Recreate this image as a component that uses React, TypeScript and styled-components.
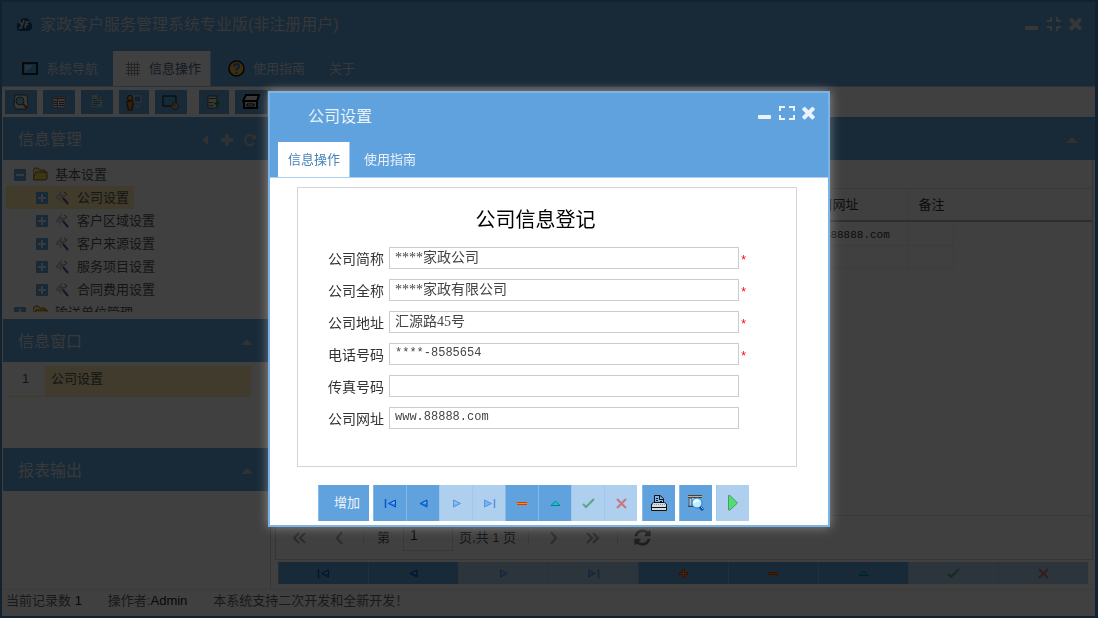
import React from 'react';
import styled, { createGlobalStyle, css } from 'styled-components';

const blue = '#60a2dd';
const lightBlue = '#aecfee';
const sans = '"Liberation Sans", "Noto Sans CJK SC", sans-serif';
const serif = '"Liberation Serif", "Noto Sans CJK SC", serif';
const mono = '"Liberation Mono", "Noto Sans CJK SC", monospace';

const GlobalStyle = createGlobalStyle`
  * { box-sizing: border-box; }
  body { margin: 0; font: 13px/20px ${sans}; color: #555; background: #fff; }
  button { border: 0; padding: 0; margin: 0; background: none; font: inherit; color: inherit; }
  svg { display: block; flex: none; }
  h1, h2, h3, p { margin: 0; font-weight: 400; }
`;

/* ---------- icons ---------- */

const MinimizeIcon = () => (
  <svg width="16" height="16" viewBox="0 0 16 16"><rect x="1" y="10" width="13" height="4" rx="1" fill="currentColor" /></svg>
);
const MaximizeIcon = () => (
  <svg width="16" height="16" viewBox="0 0 16 16" fill="none" stroke="currentColor" strokeWidth="2">
    <path d="M6 2H1V6M10 2H15V6M1 10V14H6M15 10V14H10" />
  </svg>
);
const RestoreIcon = () => (
  <svg width="16" height="16" viewBox="0 0 16 16" fill="none" stroke="currentColor" strokeWidth="2">
    <path d="M5 1V5H1M11 1V5H15M1 11H5V15M15 11H11V15" />
  </svg>
);
const CloseIcon = () => (
  <svg width="16" height="16" viewBox="192 192 1500 1500" fill="currentColor">
    <path d="M1490 1322q0 40-28 68l-136 136q-28 28-68 28t-68-28l-294-294-294 294q-28 28-68 28t-68-28l-136-136q-28-28-28-68t28-68l294-294-294-294q-28-28-28-68t28-68l136-136q28-28 68-28t68 28l294 294 294-294q28-28 68-28t68 28l136 136q28 28 28 68t-28 68l-294 294 294 294q28 28 28 68z" />
  </svg>
);
const CaretLeft = () => <svg width="12" height="12" viewBox="0 0 12 12"><path d="M9 1V11L3 6z" fill="currentColor" /></svg>;
const CaretUp = () => <svg width="12" height="12" viewBox="0 0 12 12"><path d="M0 9L6 3L12 9z" fill="currentColor" /></svg>;
const PlusIcon = () => <svg width="12" height="12" viewBox="0 0 12 12"><path d="M4 0H8V4H12V8H8V12H4V8H0V4H4z" fill="currentColor" /></svg>;
const RepeatIcon = () => (
  <svg width="14" height="14" viewBox="0 0 1536 1792" fill="currentColor">
    <path d="M1536 256v448q0 26-19 45t-45 19h-448q-42 0-59-40-17-39 14-69l138-138q-148-137-349-137-104 0-198.500 40.500t-163.500 109.500-109.500 163.500-40.500 198.500 40.500 198.500 109.500 163.500 163.500 109.500 198.500 40.500q119 0 225-52t179-147q7-10 23-12 15 0 25 9l137 138q9 8 9.500 20.500t-7.500 22.500q-109 132-264 204.500t-327 72.500q-156 0-298-61t-245-164-164-245-61-298 61-298 164-245 245-164 298-61q147 0 284.500 55.500t244.500 156.500l130-129q29-31 70-14 39 17 39 59z" />
  </svg>
);
const RefreshIcon = () => (
  <svg width="19" height="19" viewBox="0 0 1792 1792" fill="currentColor">
    <path d="M1639 1056q0 5-1 7-64 268-268 434.500t-478 166.500q-146 0-282.500-55t-243.500-157l-129 129q-19 19-45 19t-45-19-19-45v-448q0-26 19-45t45-19h448q26 0 45 19t19 45-19 45l-137 137q71 66 161 102t187 36q134 0 250-65t186-179q11-17 53-117 8-23 30-23h192q13 0 22.500 9.500t9.500 22.500zm25-800v448q0 26-19 45t-45 19h-448q-26 0-45-19t-19-45 19-45l138-138q-148-137-349-137-134 0-250 65t-186 179q-11 17-53 117-8 23-30 23h-199q-13 0-22.500-9.500t-9.500-22.500v-7q65-268 270-434.500t480-166.500q146 0 284 55.500t245 156.500l130-129q19-19 45-19t45 19 19 45z" />
  </svg>
);
const Chevron = ({ double, right }: { double?: boolean; right?: boolean }) => (
  <svg width="16" height="16" viewBox="0 0 16 16" fill="none" stroke="#aaa" strokeWidth="2">
    {right
      ? <path d={double ? 'M2 3L7 8L2 13M8 3L13 8L8 13' : 'M6 2L11 8L6 14'} />
      : <path d={double ? 'M8 3L3 8L8 13M14 3L9 8L14 13' : 'M11 2L6 8L11 14'} />}
  </svg>
);

/* record navigator glyphs */
const FirstIcon = () => (
  <svg width="13" height="13" viewBox="0 0 13 13">
    <path d="M1.500 2V11" stroke="#0a56cc" strokeWidth="1.500" />
    <path d="M11.500 3V10L4.500 6.500z" fill="#1c84ec" stroke="#0b4cb8" /><path d="M10.500 4.500V6.500H7z" fill="#8fd4ff" />
  </svg>
);
const PrevIcon = () => (
  <svg width="13" height="13" viewBox="0 0 13 13">
    <path d="M10 3V10L3 6.500z" fill="#1480ea" stroke="#0b4cb8" /><path d="M9 4.500V6.500H5.500z" fill="#7cc6ff" />
  </svg>
);
const NextIcon = () => (
  <svg width="13" height="13" viewBox="0 0 13 13"><path d="M3.500 3V10L10.500 6.500z" fill="#74b4f4" stroke="#5b93dc" /><path d="M4.500 4.500V6.500H8z" fill="#a4d0fa" /></svg>
);
const LastIcon = () => (
  <svg width="13" height="13" viewBox="0 0 13 13">
    <path d="M1.500 3V10L8.500 6.500z" fill="#74b4f4" stroke="#5b93dc" /><path d="M11.500 2V11" stroke="#5b93dc" strokeWidth="1.500" />
  </svg>
);
const AddIcon = () => (
  <svg width="13" height="13" viewBox="0 0 13 13">
    <path d="M5.500 2.500H7.500V5.500H10.500V7.500H7.500V10.500H5.500V7.500H2.500V5.500H5.500z" fill="#ff9418" stroke="#e83800" />
  </svg>
);
const RemoveIcon = () => (
  <svg width="13" height="13" viewBox="0 0 13 13"><rect x="1" y="5" width="10" height="3" fill="#ff9000" /><path d="M1 5.500H11M1 7.500H11" stroke="#e03800" /></svg>
);
const EditIcon = () => (
  <svg width="13" height="13" viewBox="0 0 13 13"><path d="M2 8.500L6.500 4L11 8.500z" fill="#18c4cc" stroke="#087f92" /></svg>
);
const CheckIcon = () => (
  <svg width="13" height="13" viewBox="0 0 13 13" fill="none" stroke="#5aa68c" strokeWidth="2"><path d="M1 7L4 10L12 2" /></svg>
);
const CancelIcon = () => (
  <svg width="13" height="13" viewBox="0 0 13 13" fill="none" stroke="#c8757c" strokeWidth="2"><path d="M2 2L11 11M11 2L2 11" /></svg>
);
const PrintIcon = () => (
  <svg width="18" height="18" viewBox="0 0 18 18">
    <path d="M4.500 9V1.500H10L13.500 4.500V9" fill="#7fb7e8" stroke="#111" />
    <path d="M9.500 1V5.500H14M6 4.500H8M6 6.500H8M10 7.500H12" fill="none" stroke="#111" />
    <path d="M1.500 10L3.500 8.500H14.500L16.500 10V16.500H1.500z" fill="#d4dae4" stroke="#111" />
    <path d="M2 10.500H16" stroke="#6a9be0" strokeDasharray="1 1" /><path d="M2 13.500H16" stroke="#111" />
    <path d="M2 15.500H16" stroke="#e4e0c8" />
  </svg>
);
const PreviewIcon = () => (
  <svg width="18" height="18" viewBox="0 0 18 18">
    <path d="M1 1.500H15M1 3.500H15M1 12.500H7" stroke="#4a4038" /><path d="M1 2.500H15" stroke="#b8b0a4" /><rect x="2" y="4" width="3" height="8" fill="#8fd0f8" stroke="#555" />
    <path d="M6 4V12" stroke="#e9f4fb" />
    <circle cx="10" cy="9" r="5" fill="#c4ecff" stroke="#1a86cc" /><path d="M7 9Q8 6 12 7" stroke="#fff" strokeWidth="2" fill="none" />
    <path d="M13 13L16 16" stroke="#1c4a98" strokeWidth="3" /><path d="M14 13L16 15" stroke="#5cc0ff" />
  </svg>
);
const RunIcon = () => (
  <svg width="18" height="18" viewBox="0 0 18 18"><path d="M4.500 1.500V16H6L13.500 9L6 1.500z" fill="#4be36b" stroke="#5b8f76" /></svg>
);

/* application glyphs */
const LogoIcon = () => (
  <svg width="17" height="17" viewBox="0 0 17 17">
    <path d="M3 15Q0 14 1 10Q0 7 4 6Q5 2 9 2Q13 2 14 6Q17 8 16 12Q15 15 12 15z" fill="#10547e" />
    <path d="M3 5L6 9M8 4L5 12L3 12M9 12L10 6L13 6M10 8.500H12" stroke="#d0dae0" strokeWidth="1.500" fill="none" />
  </svg>
);
const ScreenIcon = () => (
  <svg width="16" height="16" viewBox="0 0 16 16"><rect x="1" y="2" width="14" height="11" fill="#4ba6dc" stroke="#000" strokeWidth="1.500" /><path d="M3 4H12L3 11z" fill="#8ccff0" /></svg>
);
const GridIcon = () => (
  <svg width="16" height="16" viewBox="0 0 16 16" stroke="#999"><path d="M1 3.500H15M1 6.500H15M1 9.500H15M1 12.500H15M3.500 1V15M6.500 1V15M9.500 1V15M12.500 1V15" /></svg>
);
const HelpIcon = () => (
  <svg width="17" height="17" viewBox="0 0 17 17">
    <circle cx="8.500" cy="8.500" r="7.500" fill="#f2b63c" stroke="#201000" strokeWidth="1.500" />
    <path d="M6 6.500Q6 4 8.500 4Q11 4 11 6.500Q11 8 8.500 9V10.500M8.500 12V14" fill="none" stroke="#3f6fc0" strokeWidth="2" />
  </svg>
);
const SearchPage = () => (
  <svg width="18" height="18" viewBox="0 0 18 18">
    <path d="M3 2H15L16 12L14 16H4L2 13z" fill="#eee7dc" stroke="#5a5248" />
    <circle cx="8" cy="8" r="4" fill="#7cc4d8" stroke="#2a5560" /><path d="M11 11L15 15" stroke="#a0481c" strokeWidth="2" />
  </svg>
);
const ListPage = () => (
  <svg width="18" height="18" viewBox="0 0 18 18">
    <rect x="3" y="4" width="12" height="11" fill="#e6e6e6" stroke="#777" /><path d="M4 5.500H14" stroke="#b04a28" />
    <path d="M4 8.500H7M4 10.500H7M4 12.500H7M9 8.500H14M9 10.500H14M9 12.500H14" stroke="#555" /><path d="M7.500 6V15" stroke="#3c78b8" />
  </svg>
);
const DocPage = () => (
  <svg width="18" height="18" viewBox="0 0 18 18">
    <path d="M3.500 1.500H10.500L14.500 5.500V14.500H3.500z" fill="#a9cbe0" stroke="#7aa8c4" /><path d="M10.500 2V6H14M5 6.500H9M5 8.500H12M5 10.500H12M5 12.500H10" fill="none" stroke="#54809c" />
  </svg>
);
const UserPc = () => (
  <svg width="18" height="18" viewBox="0 0 18 18">
    <rect x="9" y="3" width="7" height="6" fill="#4a78c8" stroke="#d8d8d8" /><path d="M9 12.500H16M10 14.500H15" stroke="#bbb" />
    <circle cx="5" cy="5" r="2.500" fill="#e0a050" stroke="#402000" /><path d="M2 8H8V13H7V17H3V13H2z" fill="#c88830" stroke="#402000" />
  </svg>
);
const ScreenColor = () => (
  <svg width="18" height="18" viewBox="0 0 18 18">
    <rect x="1" y="3" width="13" height="10" fill="#4ba6dc" stroke="#111" /><circle cx="13" cy="13" r="3.500" fill="#d0a040" stroke="#6040a0" /><path d="M10 13L13 10V13z" fill="#40a060" />
  </svg>
);
const ExportPage = () => (
  <svg width="18" height="18" viewBox="0 0 18 18">
    <rect x="3" y="3" width="9" height="12" fill="#dcdcdc" stroke="#555" /><path d="M4 5.500H12M4 9.500H8M4 12.500H8" stroke="#555" />
    <path d="M9 10.500H15M12 7.500V13.500" stroke="#2c8c2c" strokeWidth="2" />
  </svg>
);
const PrinterBig = () => (
  <svg width="18" height="18" viewBox="0 0 18 18">
    <path d="M4 2H17L15 8H1z" fill="#ddd" stroke="#000" strokeWidth="2" /><path d="M2 8H15V15H2z" fill="#ccc" stroke="#000" strokeWidth="2" />
    <path d="M5 11H12V13H5z" fill="#fff" stroke="#000" />
  </svg>
);
const Toggle = ({ open }: { open?: boolean }) => (
  <svg width="12" height="12" viewBox="0 0 12 12"><rect width="12" height="12" rx="1" fill={blue} /><path d={open ? 'M2 6H10' : 'M2 6H10M6 2V10'} stroke="#dde6ee" strokeWidth="2" /></svg>
);
const FolderIcon = () => (
  <svg width="15" height="16" viewBox="1 0 15 16">
    <path d="M1 12V3L3 1H6L8 3H13V6" fill="#f6e69a" stroke="#8a6c10" /><path d="M4 5H15V12L13 13H2L1 12z" fill="#f2d552" stroke="#7d6210" />
  </svg>
);
const ToolIcon = () => (
  <svg width="15" height="16" viewBox="0 0 15 16">
    <path d="M7 1L3 5L1 8L4 9L6 12" fill="#ddd" stroke="#aaa" strokeDasharray="2 1" /><path d="M9 2L12 4L10 6" fill="none" stroke="#777" />
    <path d="M4 4L9 7M6 8L10 5" stroke="#bbb" strokeWidth="2" /><path d="M8 8L13 14" stroke="#7a3ca8" strokeWidth="2" />
  </svg>
);

/* ---------- shared parts ---------- */

const WindowButtons = styled.div`
  display: flex;
  align-items: flex-start;
  gap: 6px;
`;

const Tabs = styled.nav`
  display: flex;
  height: 36px;
  border-bottom: 1px solid #a9d0f2;
  background: ${blue};
`;

const Tab = styled.button<{ $active?: boolean; $pad: number }>`
  display: flex;
  align-items: center;
  gap: 8px;
  height: 35px;
  padding: 0 10px 0 ${p => p.$pad}px;
  color: #e9f1f9;
  ${p => p.$active && css`
    padding-right: 9px;
    border-right: 1px solid #a9d0f2;
    background: #fff;
    color: #4583bb;
  `}
`;

const NavGroup = styled.div<{ $fill?: boolean }>`
  display: flex;
  margin-right: 1px;
  ${p => p.$fill && css`height: 22px; margin: 2px 7px 5px 3px;`}
`;

const NavButton = styled.button<{ $off?: boolean; $fill?: boolean; $wide?: boolean }>`
  display: flex;
  align-items: center;
  justify-content: center;
  height: ${p => (p.$fill ? 22 : 36)}px;
  width: ${p => (p.$wide ? 51 : 33)}px;
  ${p => p.$wide && css`padding-left: 6px;`}
  ${p => p.$fill && css`flex: 1;`}
  background: ${p => (p.$off ? lightBlue : blue)};
  border-left: 1px solid ${p => (p.$off ? '#a0c8ec' : '#86b9e6')};
  color: #eef4fa;
`;

/* ---------- application window ---------- */

const AppWindow = styled.div`
  display: flex;
  flex-direction: column;
  min-height: 100vh;
  border: 2px solid #4a86bc;
  border-right-width: 3px;
  background: #fff;
`;

const TitleBar = styled.header`
  display: flex;
  align-items: center;
  justify-content: space-between;
  height: 49px;
  padding: 0 11px 6px 14px;
  background: ${blue};
  color: #d3dae1;
`;

const AppTitle = styled.h1`
  display: flex;
  align-items: center;
  gap: 7px;
  padding-top: 2px;
  font-size: 16px;
  line-height: 24px;
`;

const AppTabs = styled(Tabs)`
  gap: 5px;
  padding-left: 8px;
  > button { color: #dbe3ea; }
  > button:nth-child(2) { color: #4d6c8c; }
`;

const Toolbar = styled.div`
  display: flex;
  align-items: center;
  gap: 6px;
  height: 30px;
  padding-left: 3px;
`;

const ToolButton = styled.button<{ $narrow?: boolean }>`
  display: flex;
  align-items: center;
  justify-content: center;
  width: ${p => (p.$narrow ? 30 : 32)}px;
  height: 24px;
  background: ${blue};
`;

const ToolGap = styled.span`
  width: 0;
`;

const Columns = styled.div`
  display: flex;
  flex: 1;
  gap: 4px;
`;

const Sidebar = styled.aside`
  flex: none;
  width: 269px;
  padding-left: 1px;
  border-right: 1px solid #c4dcf0;
`;

const PanelHeader = styled.h2`
  display: flex;
  align-items: center;
  justify-content: space-between;
  height: 43px;
  padding: 2px 13px 0 15px;
  background: ${blue};
  color: #dde3e9;
  font-size: 16px;
  line-height: 24px;
`;

const PanelTools = styled.span`
  display: flex;
  align-items: center;
  gap: 10px;
  color: #bdc4cb;
`;

const FoldTool = styled(PanelTools)`
  padding-right: 4px;
`;

const TreeBody = styled.div`
  height: 159px;
  padding: 3px 3px 7px;
`;

const Tree = styled.ul`
  height: 149px;
  margin: 0;
  padding: 0;
  overflow: hidden;
  list-style: none;
`;

const TreeRow = styled.li<{ $child?: boolean; $selected?: boolean }>`
  display: flex;
  align-items: center;
  gap: 7px;
  width: max-content;
  height: 23px;
  padding: 0 5px 0 ${p => (p.$child ? 30 : 8)}px;
  ${p => p.$selected && css`background: #ffe9a8;`}
`;

const InfoBody = styled.div`
  height: 86px;
  padding: 4px 19px 4px 3px;
`;

const InfoRow = styled.div`
  display: flex;
  height: 31px;
  background: #ffe9b0;
  line-height: 26px;
`;

const InfoIndex = styled.span`
  width: 39px;
  margin-bottom: 1px;
  background: #fff;
  text-align: center;
`;

const InfoName = styled.span`
  padding-left: 6px;
`;

const Main = styled.main`
  display: flex;
  flex: 1;
  flex-direction: column;
  min-width: 0;
`;

const MainHeader = styled(PanelHeader)`
  justify-content: flex-end;
`;

const GridPanel = styled.section`
  display: flex;
  flex: 1;
  flex-direction: column;
  margin-right: 2px;
  padding-top: 28px;
  border: 1px solid #c4dcf0;
  border-top: 0;
`;

const GridHead = styled.div`
  border-top: 1px solid #dde6ee;
  border-bottom: 2px solid #b8b8b8;
`;

const DataTable = styled.table`
  width: 678px;
  border-collapse: collapse;
  table-layout: fixed;
  font-family: ${mono};

  col.site { width: 112px; }
  col.note { width: 46px; }
  th, td {
    height: 23px;
    padding: 4px 8px 0;
    border-right: 1px solid #eee;
    border-bottom: 1px solid #eee;
    font-weight: 400;
    font-size: 11px;
    line-height: 18px;
    text-align: left;
    white-space: nowrap;
    color: #333;
  }
  th { height: 31px; padding: 2px 10px 0; font-size: 13px; border-bottom: 0; }
  th:last-child { border-right: 0; }
`;

const Spacer = styled.div`
  flex: 1;
`;

const Pager = styled.div`
  display: flex;
  align-items: center;
  height: 44px;
  padding-left: 3px;
  border-top: 1px solid #dde6ee;
  white-space: pre;
`;

const PagerButton = styled.button`
  display: flex;
  justify-content: center;
  width: 40px;
  color: #777;
`;

const Separator = styled.i<{ $left?: number; $right?: number }>`
  width: 1px;
  height: 14px;
  margin: 0 ${p => p.$right ?? 4}px 0 ${p => p.$left ?? 4}px;
  background: #e4e4e4;
`;

const PageInput = styled.input`
  width: 50px;
  height: 26px;
  margin: 0 6px 0 13px;
  padding: 0 6px 6px;
  border: 1px solid #ddd;
  background: #fff;
  font: 14px/20px ${sans};
  color: #333;
`;

const StatusBar = styled.footer`
  display: flex;
  gap: 26px;
  height: 27px;
  padding-left: 4px;
  border-top: 1px solid #eee;
  line-height: 22px;
  color: #666;
  strong { font-weight: 400; color: #222; }
`;

/* ---------- dialog ---------- */

const Backdrop = styled.div`
  position: fixed;
  inset: 0;
  display: flex;
  align-items: center;
  justify-content: center;
  background: rgba(0, 0, 0, 0.75);
`;

const Dialog = styled.section`
  width: 562px;
  border: 2px solid #7cb4e8;
  background: #fff;
  box-shadow: 0 0 10px rgba(255, 255, 255, 0.4);
`;

const DialogTitle = styled.header`
  display: flex;
  justify-content: space-between;
  height: 49px;
  padding: 12px 11px 0 38px;
  background: ${blue};
  color: #eaf2fa;
  h2 { font-size: 16px; line-height: 24px; }
`;

const DialogTabs = styled(Tabs)`
  padding-left: 8px;
`;

const DialogBody = styled.form`
  padding: 9px 0 4px;
`;

const FormBox = styled.fieldset`
  height: 280px;
  margin: 0 31px 18px 27px;
  padding: 18px 0 0 27px;
  border: 1px solid #d4d4d4;
`;

const FormTitle = styled.h3`
  margin: 0 50px 12px 0;
  color: #000;
  font-size: 20px;
  line-height: 29px;
  text-align: center;
`;

const Field = styled.div`
  display: flex;
  align-items: center;
  height: 22px;
  margin-bottom: 10px;
  label { width: 64px; padding: 2px 0 0 3px; font-size: 14px; line-height: 22px; white-space: nowrap; color: #333; }
`;

const TextInput = styled.input<{ $latin?: boolean }>`
  width: 350px;
  height: 22px;
  padding: 0 5px ${p => (p.$latin ? 3 : 5)}px;
  border: 1px solid #ccc;
  color: #444;
  font: ${p => (p.$latin ? 12 : 14)}px/16px ${p => (p.$latin ? mono : serif)};
`;

const Required = styled.span`
  padding: 6px 0 0 1px;
  color: #f00;
  font: 12px/18px ${mono};
`;

const DialogActions = styled.div`
  display: flex;
  gap: 4px;
  padding-left: 48px;
`;

const tree = ['公司设置', '客户区域设置', '客户来源设置', '服务项目设置', '合同费用设置'];

const fields = [
  { id: 'short', label: '公司简称', value: '****家政公司', required: true },
  { id: 'full', label: '公司全称', value: '****家政有限公司', required: true },
  { id: 'address', label: '公司地址', value: '汇源路45号', required: true },
  { id: 'phone', label: '电话号码', value: '****-8585654', required: true, latin: true },
  { id: 'fax', label: '传真号码', value: '' },
  { id: 'site', label: '公司网址', value: 'www.88888.com', latin: true },
];

type NavItem = { name: string; icon: React.ReactNode; off?: boolean };
const addItem: NavItem = { name: '新增', icon: <AddIcon /> };
const navItems: NavItem[] = [
  { name: '首记录', icon: <FirstIcon /> },
  { name: '上一记录', icon: <PrevIcon /> },
  { name: '下一记录', icon: <NextIcon />, off: true },
  { name: '末记录', icon: <LastIcon />, off: true },
  { name: '删除', icon: <RemoveIcon /> },
  { name: '编辑', icon: <EditIcon /> },
  { name: '保存', icon: <CheckIcon />, off: true },
  { name: '取消', icon: <CancelIcon />, off: true },
];

const Navigator = ({ fill, items }: { fill?: boolean; items: NavItem[] }) => (
  <NavGroup $fill={fill}>
    {items.map(item => (
      <NavButton key={item.name} type="button" aria-label={item.name} $off={item.off} $fill={fill}>{item.icon}</NavButton>
    ))}
  </NavGroup>
);

const Cols = () => <colgroup><col /><col className="site" /><col className="note" /></colgroup>;

export default function App() {
  return (
    <>
      <GlobalStyle />
      <AppWindow>
        <TitleBar>
          <AppTitle><LogoIcon />家政客户服务管理系统专业版(非注册用户)</AppTitle>
          <WindowButtons>
            <button aria-label="最小化"><MinimizeIcon /></button>
            <button aria-label="还原"><RestoreIcon /></button>
            <button aria-label="关闭"><CloseIcon /></button>
          </WindowButtons>
        </TitleBar>
        <AppTabs>
          <Tab $pad={12}><ScreenIcon />系统导航</Tab>
          <Tab $pad={12} $active><GridIcon />信息操作</Tab>
          <Tab $pad={12}><HelpIcon />使用指南</Tab>
          <Tab $pad={9}>关于</Tab>
        </AppTabs>
        <Toolbar>
          <ToolButton aria-label="查询"><SearchPage /></ToolButton>
          <ToolButton aria-label="列表"><ListPage /></ToolButton>
          <ToolButton aria-label="文档"><DocPage /></ToolButton>
          <ToolButton aria-label="用户" $narrow><UserPc /></ToolButton>
          <ToolButton aria-label="界面"><ScreenColor /></ToolButton>
          <ToolGap />
          <ToolButton aria-label="导出" $narrow><ExportPage /></ToolButton>
          <ToolButton aria-label="打印"><PrinterBig /></ToolButton>
        </Toolbar>
        <Columns>
          <Sidebar>
            <PanelHeader>
              信息管理
              <PanelTools><CaretLeft /><PlusIcon /><RepeatIcon /></PanelTools>
            </PanelHeader>
            <TreeBody>
              <Tree>
                <TreeRow><Toggle open /><FolderIcon />基本设置</TreeRow>
                {tree.map((name, i) => (
                  <TreeRow key={name} $child $selected={i === 0}><Toggle /><ToolIcon />{name}</TreeRow>
                ))}
                <TreeRow><Toggle /><FolderIcon />输送单位管理</TreeRow>
              </Tree>
            </TreeBody>
            <PanelHeader>信息窗口<FoldTool><CaretUp /></FoldTool></PanelHeader>
            <InfoBody>
              <InfoRow><InfoIndex>1</InfoIndex><InfoName>公司设置</InfoName></InfoRow>
            </InfoBody>
            <PanelHeader>报表输出<FoldTool><CaretUp /></FoldTool></PanelHeader>
          </Sidebar>
          <Main>
            <MainHeader><FoldTool><CaretUp /></FoldTool></MainHeader>
            <GridPanel>
              <GridHead>
                <DataTable>
                  <Cols />
                  <thead><tr><th /><th>公司网址</th><th>备注</th></tr></thead>
                </DataTable>
              </GridHead>
              <DataTable>
                <Cols />
                <tbody>
                  <tr><td /><td>www.88888.com</td><td /></tr>
                  <tr><td /><td /><td /></tr>
                </tbody>
              </DataTable>
              <Spacer />
              <Pager>
                <PagerButton aria-label="首页"><Chevron double /></PagerButton>
                <PagerButton aria-label="上一页"><Chevron /></PagerButton>
                <Separator $right={13} />
                <label htmlFor="page">第</label>
                <PageInput id="page" defaultValue="1" />
                <span>页,共 1 页</span>
                <Separator $left={12} />
                <PagerButton aria-label="下一页"><Chevron right /></PagerButton>
                <PagerButton aria-label="末页"><Chevron double right /></PagerButton>
                <Separator />
                <PagerButton aria-label="刷新"><RefreshIcon /></PagerButton>
              </Pager>
            </GridPanel>
            <Navigator fill items={[...navItems.slice(0, 4), addItem, ...navItems.slice(4)]} />
          </Main>
        </Columns>
        <StatusBar>
          <span>当前记录数 <strong>1</strong></span>
          <span>操作者:<strong>Admin</strong></span>
          <span>本系统支持二次开发和全新开发！</span>
        </StatusBar>
      </AppWindow>

      <Backdrop>
        <Dialog role="dialog" aria-labelledby="dialog-title">
          <DialogTitle>
            <h2 id="dialog-title">公司设置</h2>
            <WindowButtons>
              <button aria-label="最小化"><MinimizeIcon /></button>
              <button aria-label="最大化"><MaximizeIcon /></button>
              <button aria-label="关闭"><CloseIcon /></button>
            </WindowButtons>
          </DialogTitle>
          <DialogTabs>
            <Tab $pad={10} $active>信息操作</Tab>
            <Tab $pad={14}>使用指南</Tab>
          </DialogTabs>
          <DialogBody>
            <FormBox>
              <FormTitle>公司信息登记</FormTitle>
              {fields.map(f => (
                <Field key={f.id}>
                  <label htmlFor={f.id}>{f.label}</label>
                  <TextInput id={f.id} defaultValue={f.value} $latin={f.latin} />
                  {f.required && <Required>*</Required>}
                </Field>
              ))}
            </FormBox>
            <DialogActions>
              <NavButton type="button" $wide>增加</NavButton>
              <Navigator items={navItems} />
              <NavButton type="button" aria-label="打印"><PrintIcon /></NavButton>
              <NavButton type="button" aria-label="预览"><PreviewIcon /></NavButton>
              <NavButton type="button" aria-label="执行" $off><RunIcon /></NavButton>
            </DialogActions>
          </DialogBody>
        </Dialog>
      </Backdrop>
    </>
  );
}
